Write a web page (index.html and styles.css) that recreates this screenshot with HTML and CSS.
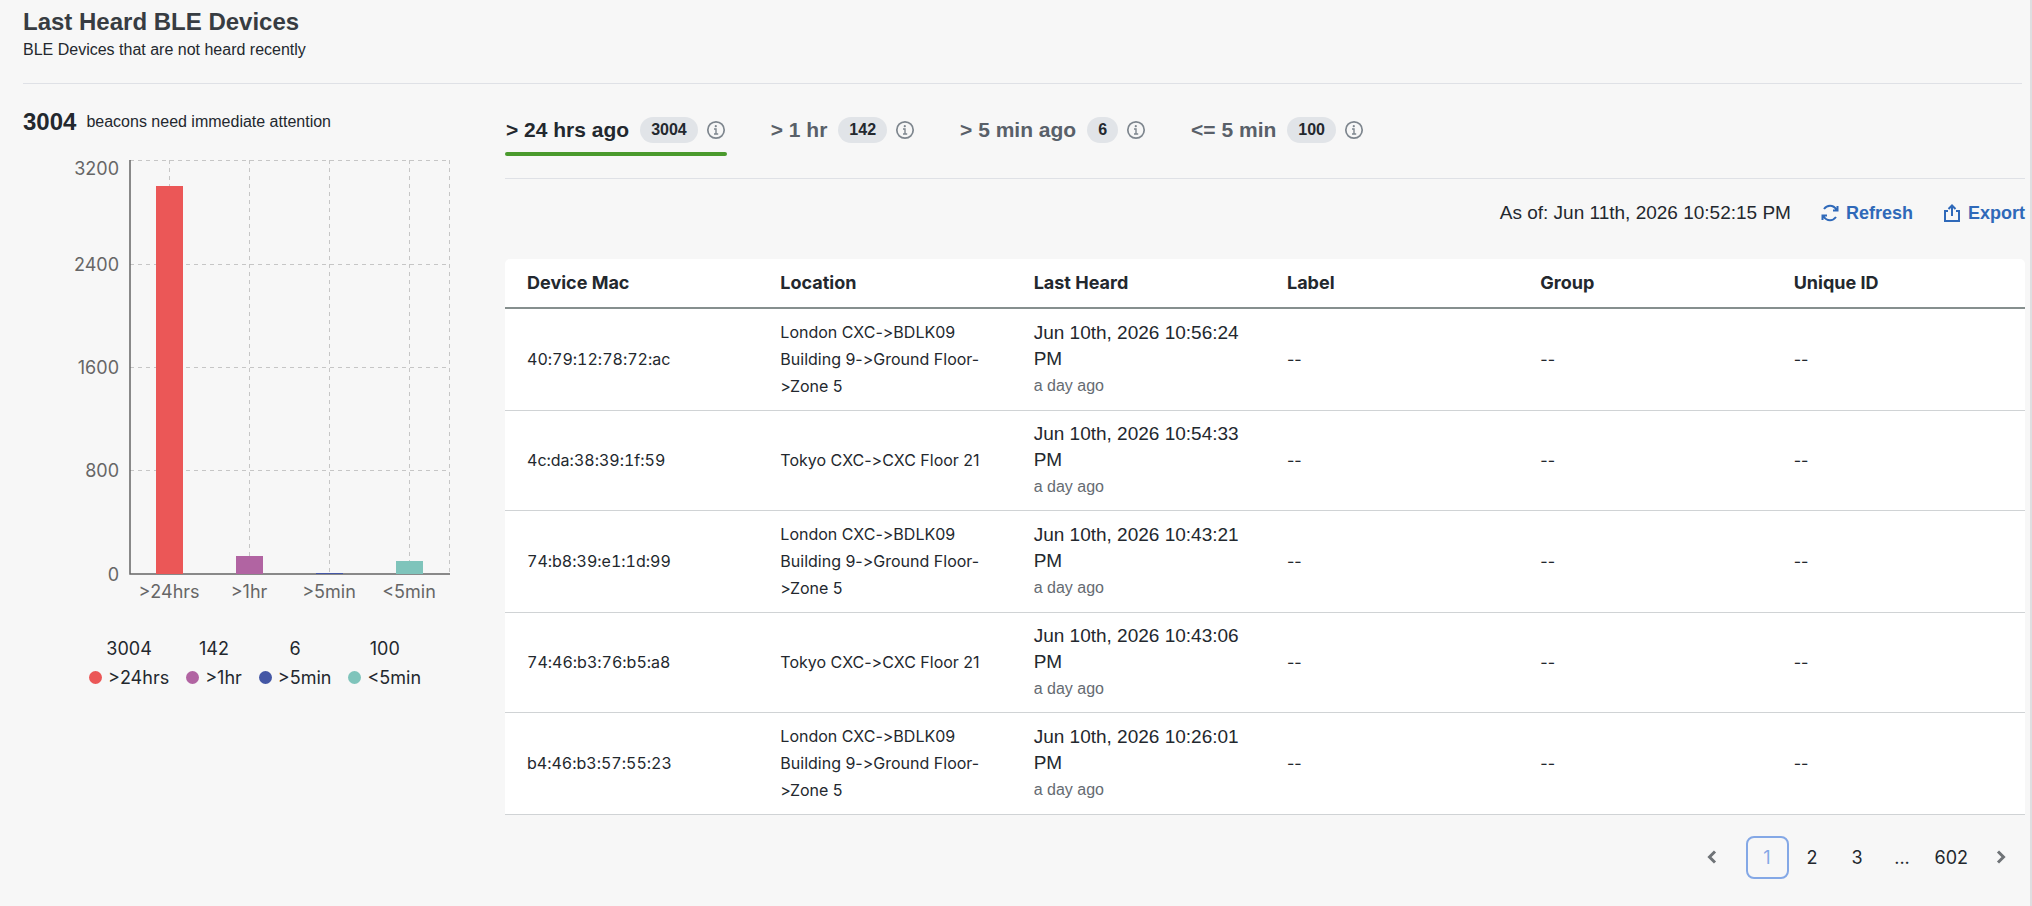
FILE: index.html
```html
<!DOCTYPE html>
<html lang="en">

<head>
    <meta charset="UTF-8" />
    <meta name="viewport" content="width=device-width, initial-scale=1.0" />
    <title>Last Heard BLE Devices</title>
    <link rel="stylesheet" href="styles.css">
</head>

<body>
    <svg class="defs" aria-hidden="true">
        <symbol id="info" viewBox="0 0 20 20">
            <circle cx="10" cy="10" r="8.2" fill="none" stroke="currentColor" stroke-width="1.7" />
            <circle cx="9.8" cy="6.2" r="1.1" fill="currentColor" />
            <path d="M8 9h2v5M8 14h4.2" fill="none" stroke="currentColor" stroke-width="1.4" />
        </symbol>
    </svg>

    <main class="page">
        <header class="page-header">
            <h1>Last Heard BLE Devices</h1>
            <p>BLE Devices that are not heard recently</p>
        </header>

        <div class="content">
            <section class="summary">
                <div class="attention"><strong>3004</strong><span>beacons need immediate attention</span></div>

                <svg class="chart" viewBox="0 0 450 470" role="img" aria-label="Beacons by last heard time">
                    <g class="grid">
                        <path d="M107 20.5H426M107 124.5H426M107 227.5H426M107 330.5H426" />
                        <path d="M146.5 20V434M226.5 20V434M306.5 20V434M386.5 20V434M426.5 20V434" />
                    </g>
                    <path class="axis" d="M107 20V434H427" />
                    <rect x="133" y="46" width="27" height="388" fill="#eb5757" />
                    <rect x="213" y="416" width="27" height="18" fill="#b164a2" />
                    <rect x="293" y="433" width="27" height="1" fill="#4457a5" />
                    <rect x="373" y="421" width="27" height="13" fill="#7fc4bb" />
                    <g class="ticks-y">
                        <text x="96" y="35">3200</text>
                        <text x="96" y="131">2400</text>
                        <text x="96" y="234">1600</text>
                        <text x="96" y="337">800</text>
                        <text x="96" y="441">0</text>
                    </g>
                    <g class="ticks-x">
                        <text x="146" y="458">&gt;24hrs</text>
                        <text x="226" y="458">&gt;1hr</text>
                        <text x="306" y="458">&gt;5min</text>
                        <text x="386" y="458">&lt;5min</text>
                    </g>
                </svg>

                <ul class="legend">
                    <li><span>3004</span><span class="key red">&gt;24hrs</span></li>
                    <li><span>142</span><span class="key purple">&gt;1hr</span></li>
                    <li><span>6</span><span class="key blue">&gt;5min</span></li>
                    <li><span>100</span><span class="key teal">&lt;5min</span></li>
                </ul>
            </section>

            <section class="devices">
                <nav class="tabs">
                    <button type="button" class="tab active">&gt; 24 hrs ago <span class="badge">3004</span><svg class="info"><use href="#info" /></svg></button>
                    <button type="button" class="tab">&gt; 1 hr <span class="badge">142</span><svg class="info"><use href="#info" /></svg></button>
                    <button type="button" class="tab">&gt; 5 min ago <span class="badge">6</span><svg class="info"><use href="#info" /></svg></button>
                    <button type="button" class="tab">&lt;= 5 min <span class="badge">100</span><svg class="info"><use href="#info" /></svg></button>
                </nav>

                <div class="toolbar">
                    <span class="as-of">As of: Jun 11th, 2026 10:52:15 PM</span>
                    <button type="button" class="action">
                        <svg viewBox="0 0 18 18">
                            <path d="M3 5C4.500 3 6.600 1.800 9 1.800c2.800 0 5 1.500 6.600 4M16.500 2v4.500h-4.500M15 13c-1.500 2-3.600 3.200-6 3.200-2.800 0-5-1.500-6.600-4M1.500 16v-4.500h4.500" />
                        </svg>
                        Refresh
                    </button>
                    <button type="button" class="action">
                        <svg viewBox="0 0 18 18">
                            <path d="M5 7H2v10h14V7h-3M9 12V1.500M5.500 5L9 1.500L12.500 5" />
                        </svg>
                        Export
                    </button>
                </div>

                <table class="device-table">
                    <thead>
                        <tr>
                            <th>Device Mac</th>
                            <th>Location</th>
                            <th>Last Heard</th>
                            <th>Label</th>
                            <th>Group</th>
                            <th>Unique ID</th>
                        </tr>
                    </thead>
                    <tbody>
                        <tr>
                            <td class="mac">40:79:12:78:72:ac</td>
                            <td>London CXC-&gt;BDLK09 Building 9-&gt;Ground Floor-<wbr>&gt;Zone 5</td>
                            <td class="heard">Jun 10th, 2026 10:56:24 PM<small>a day ago</small></td>
                            <td>--</td>
                            <td>--</td>
                            <td>--</td>
                        </tr>
                        <tr>
                            <td class="mac">4c:da:38:39:1f:59</td>
                            <td>Tokyo CXC-&gt;CXC Floor 21</td>
                            <td class="heard">Jun 10th, 2026 10:54:33 PM<small>a day ago</small></td>
                            <td>--</td>
                            <td>--</td>
                            <td>--</td>
                        </tr>
                        <tr>
                            <td class="mac">74:b8:39:e1:1d:99</td>
                            <td>London CXC-&gt;BDLK09 Building 9-&gt;Ground Floor-<wbr>&gt;Zone 5</td>
                            <td class="heard">Jun 10th, 2026 10:43:21 PM<small>a day ago</small></td>
                            <td>--</td>
                            <td>--</td>
                            <td>--</td>
                        </tr>
                        <tr>
                            <td class="mac">74:46:b3:76:b5:a8</td>
                            <td>Tokyo CXC-&gt;CXC Floor 21</td>
                            <td class="heard">Jun 10th, 2026 10:43:06 PM<small>a day ago</small></td>
                            <td>--</td>
                            <td>--</td>
                            <td>--</td>
                        </tr>
                        <tr>
                            <td class="mac">b4:46:b3:57:55:23</td>
                            <td>London CXC-&gt;BDLK09 Building 9-&gt;Ground Floor-<wbr>&gt;Zone 5</td>
                            <td class="heard">Jun 10th, 2026 10:26:01 PM<small>a day ago</small></td>
                            <td>--</td>
                            <td>--</td>
                            <td>--</td>
                        </tr>
                    </tbody>
                </table>

                <nav class="pagination" aria-label="Pagination">
                    <button type="button" class="arrow prev" aria-label="Previous page"><svg viewBox="0 0 10 14"><path d="M8 1.500L2.500 7L8 12.500" /></svg></button>
                    <button type="button" class="current">1</button>
                    <button type="button">2</button>
                    <button type="button">3</button>
                    <span>...</span>
                    <button type="button" class="last">602</button>
                    <button type="button" class="arrow" aria-label="Next page"><svg viewBox="0 0 10 14"><path d="M2 1.500L7.500 7L2 12.500" /></svg></button>
                </nav>
            </section>
        </div>
    </main>
</body>

</html>
```
FILE: styles.css
```css
* {
    box-sizing: border-box;
}

body {
    margin: 0;
    min-height: 100vh;
    background-color: #f7f7f7;
    border-right: 2px solid #dedfe1;
    color: #23282e;
    font-family: "Liberation Sans", Arial, sans-serif;
    font-size: 18px;
}

button {
    padding: 0;
    border: 0;
    background: none;
    color: inherit;
    font: inherit;
    cursor: pointer;
}

.defs {
    display: none;
}

.page {
    padding: 8px 5px 24px 23px;
}

.page-header {
    height: 76px;
    margin-right: 3px;
    border-bottom: 1px solid #dfe1e6;
}

.page-header h1 {
    margin: 0;
    color: #373c42;
    font-size: 24px;
    line-height: 28px;
}

.page-header p {
    margin: 0;
    font-size: 16px;
    line-height: 28px;
}

.content {
    display: flex;
}

.summary {
    flex: none;
    width: 482px;
    padding-top: 20px;
}

.attention {
    display: flex;
    align-items: center;
    gap: 10px;
    height: 36px;
    font-size: 16px;
}

.attention strong {
    font-size: 24px;
}

.chart {
    display: block;
    width: 450px;
    height: 470px;
    font-family: Inter, sans-serif;
    font-size: 18px;
}

.grid path {
    fill: none;
    stroke: #c6c6c6;
    stroke-dasharray: 4 4;
}

.axis {
    fill: none;
    stroke: #666666;
    stroke-width: 1.5;
}

.chart text {
    fill: #666666;
}

.ticks-y {
    text-anchor: end;
}

.ticks-x {
    text-anchor: middle;
}

.legend {
    display: flex;
    gap: 17px;
    margin: 24px 0 0;
    padding: 0 0 0 66px;
    list-style: none;
    font-family: Inter, sans-serif;
    line-height: 29px;
}

.legend li {
    display: flex;
    flex-direction: column;
    align-items: center;
}

.key {
    display: flex;
    align-items: center;
    gap: 6px;
}

.key::before {
    content: "";
    width: 13px;
    height: 13px;
    border-radius: 50%;
    background-color: currentColor;
}

.red::before {
    background-color: #eb5757;
}

.purple::before {
    background-color: #b164a2;
}

.blue::before {
    background-color: #4457a5;
}

.teal::before {
    background-color: #7fc4bb;
}

.devices {
    flex: 1;
    min-width: 0;
}

.tabs {
    display: flex;
    gap: 43px;
    height: 95px;
    padding-top: 30px;
    border-bottom: 1px solid #dfe1e6;
}

.tab {
    display: flex;
    align-items: center;
    height: 42px;
    padding: 0 1px 6px;
    border-bottom: 4px solid transparent;
    color: #596069;
    font-size: 21px;
    font-weight: bold;
}

.tab.active {
    position: relative;
    color: #23282e;
}

.tab.active::after {
    content: "";
    position: absolute;
    left: 0;
    right: 0;
    bottom: -4px;
    height: 4px;
    border-radius: 2px;
    background-color: #4a9a2d;
}

.badge {
    margin: 0 8px 0 11px;
    padding: 0 11px;
    border-radius: 13px;
    background-color: #e1e4e8;
    color: #23282e;
    font-size: 16px;
    line-height: 26px;
}

.info {
    width: 20px;
    height: 20px;
    color: #7e868e;
}

.toolbar {
    display: flex;
    align-items: center;
    justify-content: flex-end;
    gap: 30px;
    height: 80px;
    padding-bottom: 12px;
}

.as-of {
    font-size: 19px;
}

.action {
    display: flex;
    align-items: center;
    gap: 7px;
    color: #2f69b9;
    font-weight: bold;
}

.action svg {
    width: 18px;
    height: 18px;
    fill: none;
    stroke: currentColor;
    stroke-width: 2;
}

.device-table {
    width: 100%;
    table-layout: fixed;
    border-spacing: 0;
    border-radius: 5px 5px 0 0;
    background-color: #ffffff;
    font-family: Inter, sans-serif;
    font-size: 16px;
    font-variant-ligatures: no-contextual;
    line-height: 27px;
}

.device-table th {
    height: 50px;
    padding: 0 22px 2px;
    border-bottom: 2px solid #868f8e;
    font-size: 18px;
    font-weight: 700;
    text-align: left;
}

.device-table td {
    padding: 10px 22px;
    border-bottom: 1px solid #d0d3d5;
}

.device-table .mac {
    font-variant-numeric: tabular-nums;
}

.device-table .heard {
    font-family: "Liberation Sans", Arial, sans-serif;
    font-size: 19px;
    line-height: 26px;
}

.heard small {
    display: block;
    color: #656b72;
    font-size: 16px;
    line-height: 27px;
}

.pagination {
    display: flex;
    align-items: center;
    justify-content: flex-end;
    gap: 2px;
    padding: 21px 3px 0 0;
    font-family: Inter, sans-serif;
}

.pagination button,
.pagination span {
    min-width: 43px;
    height: 43px;
    line-height: 43px;
    text-align: center;
}

.pagination .current {
    border: 2px solid #84a8e6;
    border-radius: 8px;
    color: #84a8e6;
    line-height: 39px;
}

.pagination .last {
    padding: 0 9px;
}

.prev {
    margin-right: 10px;
}

.arrow svg {
    width: 10px;
    height: 14px;
    fill: none;
    stroke: #6f7377;
    stroke-width: 3;
}
```
